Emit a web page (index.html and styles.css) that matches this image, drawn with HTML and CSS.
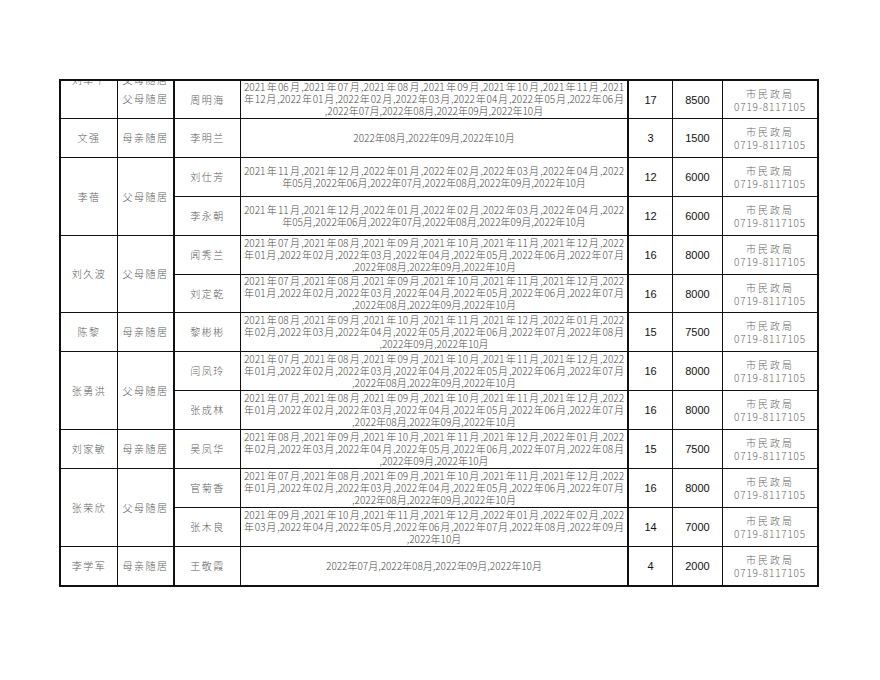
FILE: index.html
```html
<!DOCTYPE html>
<html lang="zh-CN">
<head>
<meta charset="utf-8">
<title>随居补贴名单</title>
<link rel="stylesheet" href="styles.css">
</head>
<body>
<table class="sheet">
  <colgroup>
    <col class="c1"><col class="c2"><col class="c3"><col class="c4"><col class="c5"><col class="c6"><col class="c7">
  </colgroup>
  <tbody>
    <tr class="h38">
      <td class="name top"><div class="clip"><span>刘华平</span></div></td>
      <td class="rel thick"><div class="stack"><div class="clip"><span>父母随居</span></div><div class="mid">父母随居</div></div></td>
      <td class="name">周明海</td>
      <td class="dates thick"><div class="l">2021年06月,2021年07月,2021年08月,2021年09月,2021年10月,2021年11月,2021</div><div class="l">年12月,2022年01月,2022年02月,2022年03月,2022年04月,2022年05月,2022年06月</div><div class="e">,2022年07月,2022年08月,2022年09月,2022年10月</div></td>
      <td class="num">17</td><td class="num">8500</td>
      <td class="org"><div>市民政局</div><div class="tel">0719-8117105</div></td>
    </tr>
    <tr class="h39">
      <td class="name">文强</td>
      <td class="rel thick">母亲随居</td>
      <td class="name">李明兰</td>
      <td class="dates thick"><div class="e">2022年08月,2022年09月,2022年10月</div></td>
      <td class="num">3</td><td class="num">1500</td>
      <td class="org"><div>市民政局</div><div class="tel">0719-8117105</div></td>
    </tr>
    <tr class="h39">
      <td class="name" rowspan="2">李蓓</td>
      <td class="rel thick" rowspan="2">父母随居</td>
      <td class="name">刘仕芳</td>
      <td class="dates thick"><div class="l">2021年11月,2021年12月,2022年01月,2022年02月,2022年03月,2022年04月,2022</div><div class="e">年05月,2022年06月,2022年07月,2022年08月,2022年09月,2022年10月</div></td>
      <td class="num">12</td><td class="num">6000</td>
      <td class="org"><div>市民政局</div><div class="tel">0719-8117105</div></td>
    </tr>
    <tr class="h39">
      <td class="name">李永朝</td>
      <td class="dates thick"><div class="l">2021年11月,2021年12月,2022年01月,2022年02月,2022年03月,2022年04月,2022</div><div class="e">年05月,2022年06月,2022年07月,2022年08月,2022年09月,2022年10月</div></td>
      <td class="num">12</td><td class="num">6000</td>
      <td class="org"><div>市民政局</div><div class="tel">0719-8117105</div></td>
    </tr>
    <tr class="h39">
      <td class="name" rowspan="2">刘久波</td>
      <td class="rel thick" rowspan="2">父母随居</td>
      <td class="name">闻秀兰</td>
      <td class="dates thick"><div class="l">2021年07月,2021年08月,2021年09月,2021年10月,2021年11月,2021年12月,2022</div><div class="l">年01月,2022年02月,2022年03月,2022年04月,2022年05月,2022年06月,2022年07月</div><div class="e">,2022年08月,2022年09月,2022年10月</div></td>
      <td class="num">16</td><td class="num">8000</td>
      <td class="org"><div>市民政局</div><div class="tel">0719-8117105</div></td>
    </tr>
    <tr class="h38">
      <td class="name">刘定乾</td>
      <td class="dates thick"><div class="l">2021年07月,2021年08月,2021年09月,2021年10月,2021年11月,2021年12月,2022</div><div class="l">年01月,2022年02月,2022年03月,2022年04月,2022年05月,2022年06月,2022年07月</div><div class="e">,2022年08月,2022年09月,2022年10月</div></td>
      <td class="num">16</td><td class="num">8000</td>
      <td class="org"><div>市民政局</div><div class="tel">0719-8117105</div></td>
    </tr>
    <tr class="h39">
      <td class="name">陈黎</td>
      <td class="rel thick">母亲随居</td>
      <td class="name">黎彬彬</td>
      <td class="dates thick"><div class="l">2021年08月,2021年09月,2021年10月,2021年11月,2021年12月,2022年01月,2022</div><div class="l">年02月,2022年03月,2022年04月,2022年05月,2022年06月,2022年07月,2022年08月</div><div class="e">,2022年09月,2022年10月</div></td>
      <td class="num">15</td><td class="num">7500</td>
      <td class="org"><div>市民政局</div><div class="tel">0719-8117105</div></td>
    </tr>
    <tr class="h39">
      <td class="name" rowspan="2">张勇洪</td>
      <td class="rel thick" rowspan="2">父母随居</td>
      <td class="name">闫凤玲</td>
      <td class="dates thick"><div class="l">2021年07月,2021年08月,2021年09月,2021年10月,2021年11月,2021年12月,2022</div><div class="l">年01月,2022年02月,2022年03月,2022年04月,2022年05月,2022年06月,2022年07月</div><div class="e">,2022年08月,2022年09月,2022年10月</div></td>
      <td class="num">16</td><td class="num">8000</td>
      <td class="org"><div>市民政局</div><div class="tel">0719-8117105</div></td>
    </tr>
    <tr class="h39">
      <td class="name">张成林</td>
      <td class="dates thick"><div class="l">2021年07月,2021年08月,2021年09月,2021年10月,2021年11月,2021年12月,2022</div><div class="l">年01月,2022年02月,2022年03月,2022年04月,2022年05月,2022年06月,2022年07月</div><div class="e">,2022年08月,2022年09月,2022年10月</div></td>
      <td class="num">16</td><td class="num">8000</td>
      <td class="org"><div>市民政局</div><div class="tel">0719-8117105</div></td>
    </tr>
    <tr class="h39">
      <td class="name">刘家敏</td>
      <td class="rel thick">母亲随居</td>
      <td class="name">吴凤华</td>
      <td class="dates thick"><div class="l">2021年08月,2021年09月,2021年10月,2021年11月,2021年12月,2022年01月,2022</div><div class="l">年02月,2022年03月,2022年04月,2022年05月,2022年06月,2022年07月,2022年08月</div><div class="e">,2022年09月,2022年10月</div></td>
      <td class="num">15</td><td class="num">7500</td>
      <td class="org"><div>市民政局</div><div class="tel">0719-8117105</div></td>
    </tr>
    <tr class="h39">
      <td class="name" rowspan="2">张荣欣</td>
      <td class="rel thick" rowspan="2">父母随居</td>
      <td class="name">官菊香</td>
      <td class="dates thick"><div class="l">2021年07月,2021年08月,2021年09月,2021年10月,2021年11月,2021年12月,2022</div><div class="l">年01月,2022年02月,2022年03月,2022年04月,2022年05月,2022年06月,2022年07月</div><div class="e">,2022年08月,2022年09月,2022年10月</div></td>
      <td class="num">16</td><td class="num">8000</td>
      <td class="org"><div>市民政局</div><div class="tel">0719-8117105</div></td>
    </tr>
    <tr class="h39">
      <td class="name">张木良</td>
      <td class="dates thick"><div class="l">2021年09月,2021年10月,2021年11月,2021年12月,2022年01月,2022年02月,2022</div><div class="l">年03月,2022年04月,2022年05月,2022年06月,2022年07月,2022年08月,2022年09月</div><div class="e">,2022年10月</div></td>
      <td class="num">14</td><td class="num">7000</td>
      <td class="org"><div>市民政局</div><div class="tel">0719-8117105</div></td>
    </tr>
    <tr class="h38 last">
      <td class="name">李学军</td>
      <td class="rel thick">母亲随居</td>
      <td class="name">王敬霞</td>
      <td class="dates thick"><div class="e">2022年07月,2022年08月,2022年09月,2022年10月</div></td>
      <td class="num">4</td><td class="num">2000</td>
      <td class="org"><div>市民政局</div><div class="tel">0719-8117105</div></td>
    </tr>
  </tbody>
</table>
</body>
</html>
```

FILE: styles.css
```css
html, body {
  margin: 0;
  padding: 0;
  background: #ffffff;
}

body {
  font-family: "Noto Sans CJK SC", "Noto Sans", sans-serif;
  font-weight: 300;
  color: #555555;
}

.sheet {
  margin: 79px 0 0 59px;
  border-collapse: separate;
  border-spacing: 0;
  table-layout: fixed;
  width: 760px;
  border: 2px solid #111111;
}

.c1 { width: 57px; }
.c2 { width: 57px; }
.c3 { width: 66px; }
.c4 { width: 388px; }
.c5 { width: 44px; }
.c6 { width: 50px; }
.c7 { width: 94px; }

.sheet td {
  padding: 0;
  border-right: 1px solid #111111;
  border-bottom: 1px solid #111111;
  text-align: center;
  vertical-align: middle;
  overflow: hidden;
  box-sizing: border-box;
}

.sheet td:last-child {
  border-right: none;
}

.sheet tr.last td {
  border-bottom: none;
}

.sheet td.thick {
  border-right-width: 2px;
}

.h38 { height: 38px; }
.h39 { height: 39px; }

.name,
.rel {
  font-size: 10px;
  line-height: 12px;
  letter-spacing: 1.5px;
  color: #5c5c5c;
  padding-left: 1px;
}

.sheet td.top {
  vertical-align: top;
}

.clip {
  height: 4px;
  overflow: hidden;
  display: flex;
  align-items: flex-end;
  justify-content: center;
}

.clip span {
  display: block;
  line-height: 10px;
  flex: none;
}

.stack {
  height: 37px;
  display: flex;
  flex-direction: column;
}

.stack .mid {
  flex: 1;
  display: flex;
  align-items: center;
  justify-content: center;
  padding-bottom: 6px;
}

.sheet td.dates {
  padding: 0 3px 1px 3px;
  font-size: 10px;
  line-height: 12px;
  color: #4a4a4a;
  white-space: nowrap;
}

.dates .l {
  text-align: justify;
  text-align-last: justify;
  text-justify: inter-character;
}

.dates .e {
  text-align: center;
}

.num {
  font-family: "Liberation Sans", Arial, sans-serif;
  font-weight: 400;
  font-size: 11px;
  color: #111111;
}

.org {
  font-size: 10px;
  line-height: 13px;
  letter-spacing: 2px;
  color: #666666;
  padding-bottom: 2px;
  padding-left: 2px;
}

.org .tel {
  letter-spacing: 0.8px;
}
```
